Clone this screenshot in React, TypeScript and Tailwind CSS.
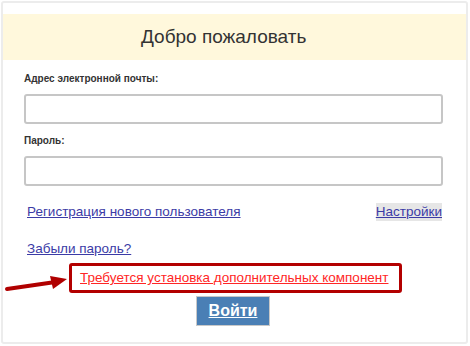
import React from "react";

export default function App() {
  return (
    <div className="w-[470px] h-[346px] bg-white relative" style={{ fontFamily: '"Liberation Sans", Arial, sans-serif' }}>
      <div className="absolute left-[1px] top-[1px] w-[467px] h-[343px] border-2 border-[#ececec] rounded-[3px] flex flex-col">
        <div className="mt-[11px] h-[46px] bg-[#fff8dc] flex items-center pl-[138px]">
          <span className="text-[19px] text-[#333]">Добро пожаловать</span>
        </div>
        <div className="flex flex-col pl-[21px] pr-[23px]">
          <div className="mt-[12px] h-[14px] text-[10px] font-bold leading-[14px] text-[#333]">Адрес электронной почты:</div>
          <div className="mt-[8px] h-[30px] border-2 border-[#c6c6c6] rounded-[3px] bg-white" />
          <div className="mt-[10px] h-[14px] text-[10px] font-bold leading-[14px] text-[#333]">Пароль:</div>
          <div className="mt-[8px] h-[30px] border-2 border-[#c6c6c6] rounded-[3px] bg-white" />
          <div className="mt-[17px] h-[18px] flex items-center justify-between">
            <span className="ml-[3px] text-[13.5px] leading-[18px] text-[#3b3ba6] underline">Регистрация нового пользователя</span>
            <span className="mr-[1px] text-[13.5px] leading-[18px] text-[#3b3ba6] underline bg-[#e6e6e6]">Настройки</span>
          </div>
          <div className="mt-[20px] h-[16px] flex items-center">
            <span className="ml-[3px] text-[13.5px] leading-[16px] text-[#3b3ba6] underline">Забыли пароль?</span>
          </div>
        </div>
        <div className="mt-[6px] ml-[66px] w-[333px] h-[30px] border-[3px] border-[#b30000] rounded-[3px] flex items-center pl-[8px]">
          <span className="text-[13.5px] leading-[16px] text-[#ff2626] underline">Требуется установка дополнительных компонент</span>
        </div>
        <div className="mt-[3px] ml-[193px] w-[74px] h-[30px] bg-[#4a7fb5] border border-[#c8c8c8] flex items-center justify-center">
          <span className="text-[16px] font-bold text-white underline leading-[20px]">Войти</span>
        </div>
      </div>
      <svg className="absolute left-[4px] top-[272px]" width="66" height="22" viewBox="0 0 66 22">
        <path d="M3 17 L48 10.5" stroke="#b00000" strokeWidth="4" strokeLinecap="round" />
        <path d="M46 4 L63 7 L49 17 Z" fill="#b00000" />
      </svg>
    </div>
  );
}
